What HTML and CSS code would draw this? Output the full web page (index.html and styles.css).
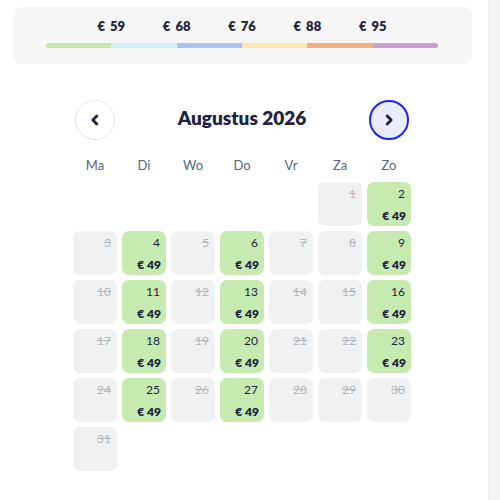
FILE: index.html
```html
<!DOCTYPE html>
<html lang="nl">
<head>
<meta charset="utf-8">
<link rel="stylesheet" href="styles.css">
</head>
<body>
<div class="page">
  <main class="main">
    <section class="legend">
      <div class="labels">
        <span>€ 59</span><span>€ 68</span><span>€ 76</span><span>€ 88</span><span>€ 95</span>
      </div>
      <div class="bar">
        <i class="c1"></i><i class="c2"></i><i class="c3"></i><i class="c4"></i><i class="c5"></i><i class="c6"></i>
      </div>
    </section>

    <section class="calendar">
      <div class="head">
        <button class="nav prev" aria-label="Vorige">
          <svg width="14" height="14" viewBox="0 0 14 14"><path d="M8.8 3 L4.8 7 L8.8 11" fill="none" stroke="#1d2340" stroke-width="2.8" stroke-linecap="round" stroke-linejoin="round"/></svg>
        </button>
        <h2 class="title">Augustus 2026</h2>
        <button class="nav next" aria-label="Volgende">
          <svg width="14" height="14" viewBox="0 0 14 14"><path d="M5.2 3 L9.2 7 L5.2 11" fill="none" stroke="#1d2340" stroke-width="2.8" stroke-linecap="round" stroke-linejoin="round"/></svg>
        </button>
      </div>
      <div class="weekdays">
        <span>Ma</span><span>Di</span><span>Wo</span><span>Do</span><span>Vr</span><span>Za</span><span>Zo</span>
      </div>
      <div class="grid">
        <div class="empty"></div><div class="empty"></div><div class="empty"></div><div class="empty"></div><div class="empty"></div>
        <div class="day off"><span class="n">1</span></div>
        <div class="day on"><span class="n">2</span><span class="p">€ 49</span></div>

        <div class="day off"><span class="n">3</span></div>
        <div class="day on"><span class="n">4</span><span class="p">€ 49</span></div>
        <div class="day off"><span class="n">5</span></div>
        <div class="day on"><span class="n">6</span><span class="p">€ 49</span></div>
        <div class="day off"><span class="n">7</span></div>
        <div class="day off"><span class="n">8</span></div>
        <div class="day on"><span class="n">9</span><span class="p">€ 49</span></div>

        <div class="day off"><span class="n">10</span></div>
        <div class="day on"><span class="n">11</span><span class="p">€ 49</span></div>
        <div class="day off"><span class="n">12</span></div>
        <div class="day on"><span class="n">13</span><span class="p">€ 49</span></div>
        <div class="day off"><span class="n">14</span></div>
        <div class="day off"><span class="n">15</span></div>
        <div class="day on"><span class="n">16</span><span class="p">€ 49</span></div>

        <div class="day off"><span class="n">17</span></div>
        <div class="day on"><span class="n">18</span><span class="p">€ 49</span></div>
        <div class="day off"><span class="n">19</span></div>
        <div class="day on"><span class="n">20</span><span class="p">€ 49</span></div>
        <div class="day off"><span class="n">21</span></div>
        <div class="day off"><span class="n">22</span></div>
        <div class="day on"><span class="n">23</span><span class="p">€ 49</span></div>

        <div class="day off"><span class="n">24</span></div>
        <div class="day on"><span class="n">25</span><span class="p">€ 49</span></div>
        <div class="day off"><span class="n">26</span></div>
        <div class="day on"><span class="n">27</span><span class="p">€ 49</span></div>
        <div class="day off"><span class="n">28</span></div>
        <div class="day off"><span class="n">29</span></div>
        <div class="day off"><span class="n">30</span></div>

        <div class="day off"><span class="n">31</span></div>
      </div>
    </section>
  </main>
  <aside class="side"></aside>
</div>
</body>
</html>
```

FILE: styles.css
```css
* { box-sizing: border-box; }
html, body { margin: 0; padding: 0; background: #fff; }
body { font-family: Lato, "Noto Sans", sans-serif; color: #1d2340; }

.page { display: flex; width: 500px; height: 500px; overflow: hidden; }
.main { width: 488px; flex: none; padding: 7px 0 0 13px; }
.side {
  flex: 1;
  background: #f5f5f6;
  box-shadow: inset 1px 0 2px rgba(0,0,0,0.04);
}

.legend {
  width: 459px;
  height: 57px;
  background: #f6f6f6;
  border-radius: 8px;
  padding: 11px 0 0 33px;
}
.labels {
  width: 392px;
  display: flex;
  padding: 0 32.67px;
  height: 17px;
}
.labels span {
  flex: 1;
  text-align: center;
  font-size: 13px;
  font-weight: 800;
  line-height: 17px;
  word-spacing: 2px;
}
.bar {
  margin-top: 8px;
  width: 392px;
  height: 5px;
  display: flex;
  border-radius: 3px;
  overflow: hidden;
}
.bar i { flex: 1; }
.c1 { background: #c6e8a9; }
.c2 { background: #d3f3f8; }
.c3 { background: #a9c4f4; }
.c4 { background: #fde8b2; }
.c5 { background: #f3b07e; }
.c6 { background: #c99fcb; }

.calendar { width: 338px; margin: 36px 0 0 60px; }
.head {
  display: flex;
  align-items: center;
  justify-content: space-between;
  padding: 0 2px;
  height: 40px;
}
.nav {
  width: 40px;
  height: 40px;
  border-radius: 50%;
  display: flex;
  align-items: center;
  justify-content: center;
  padding: 0;
  cursor: pointer;
}
.prev { background: #fff; border: 1px solid #e4e5ea; }
.next { background: #e8ecfb; border: 2px solid #1b24f5; }
.title {
  margin: 0 0 6px;
  font-size: 19px;
  font-weight: 800;
  color: #1d2340;
}

.weekdays {
  display: grid;
  grid-template-columns: repeat(7, 44px);
  column-gap: 5px;
  margin-top: 16px;
  height: 18px;
}
.weekdays span {
  text-align: center;
  font-size: 13px;
  line-height: 18px;
  color: #5b657a;
}

.grid {
  margin-top: 8px;
  display: grid;
  grid-template-columns: repeat(7, 44px);
  grid-auto-rows: 44px;
  gap: 5px;
}
.day {
  border-radius: 7px;
  display: flex;
  flex-direction: column;
  justify-content: space-between;
  align-items: flex-end;
  padding: 4px 6px 3px 0;
}
.day .n { font-size: 12px; line-height: 15px; }
.day .p { font-size: 12px; font-weight: 800; line-height: 15px; margin-right: -1px; }
.off { background: #f0f1f3; }
.off .n { color: #b3b6bd; text-decoration: line-through; }
.on { background: #c7eab0; }
.on .n { color: #1d2340; }
```
